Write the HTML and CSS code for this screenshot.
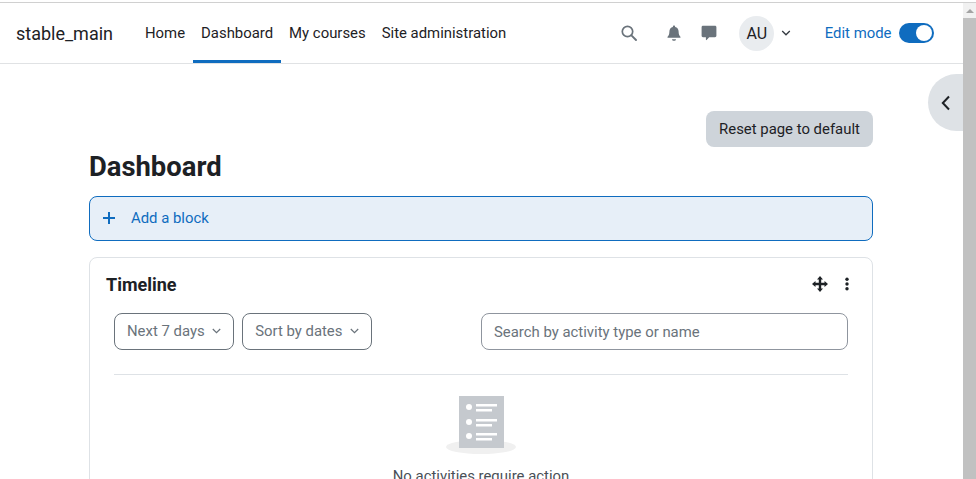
FILE: index.html
```html
<!DOCTYPE html>
<html lang="en">
<head>
<meta charset="utf-8">
<title>Dashboard</title>
<link rel="stylesheet" href="styles.css">
</head>
<body>
<div class="topline"></div>
<div class="window">
  <div class="page">
    <header class="navbar">
      <a class="brand">stable_main</a>
      <nav class="nav">
        <a class="nav-item">Home</a>
        <a class="nav-item active">Dashboard</a>
        <a class="nav-item">My courses</a>
        <a class="nav-item">Site administration</a>
      </nav>
      <div class="tools">
        <svg class="ic-search" width="16" height="16" viewBox="0 0 16 16"><circle cx="6.5" cy="6.5" r="5.2" fill="none" stroke="#6a737b" stroke-width="1.7"/><path d="M10.4 10.4L15 15" stroke="#6a737b" stroke-width="1.9" stroke-linecap="round"/></svg>
        <svg class="ic-bell" width="14" height="16" viewBox="0 0 14 16"><path d="M7 0.5c.7 0 1.1.5 1.1 1.1v.5c2.200.5 3.500 2.300 3.500 4.500 0 3.300 1 4.300 1.800 5.200.3.400.1 1-.5 1H1.100c-.6 0-.8-.6-.5-1 .8-.9 1.800-1.900 1.800-5.200 0-2.200 1.300-4 3.500-4.500v-.5C5.900 1 6.300.5 7 .5zM5 14.200h4c0 1-.9 1.600-2 1.600s-2-.6-2-1.600z" fill="#6a737b"/></svg>
        <svg class="ic-chat" width="16" height="16" viewBox="0 0 16 16"><path d="M2 .8h12c.8 0 1.400.6 1.400 1.400v8.600c0 .8-.6 1.400-1.400 1.400H8.200L5.600 15c-.3.300-.7.100-.7-.3v-2.500H2c-.8 0-1.400-.6-1.400-1.400V2.200C.6 1.400 1.200.8 2 .8z" fill="#6a737b"/></svg>
        <div class="avatar">AU</div>
        <svg class="ic-caret" width="10" height="6" viewBox="0 0 10 6"><path d="M1.200 1l3.800 3.800L8.800 1" fill="none" stroke="#343a40" stroke-width="1.300"/></svg>
        <span class="edit-label">Edit mode</span>
        <span class="switch"><span class="knob"></span></span>
      </div>
    </header>
    <button class="drawer-toggle"><svg width="10" height="16" viewBox="0 0 10 16"><path d="M8 1.500L1.800 8 8 14.500" fill="none" stroke="#1d2125" stroke-width="2"/></svg></button>
    <main class="content">
      <div class="actions"><button class="reset">Reset page to default</button></div>
      <h1 class="title">Dashboard</h1>
      <div class="add-block"><svg width="12" height="12" viewBox="0 0 12 12"><path d="M6 0v12M0 6h12" stroke="#0f6cbf" stroke-width="2"/></svg><span>Add a block</span></div>
      <section class="card">
        <div class="card-head">
          <h2 class="card-title">Timeline</h2>
          <div class="card-icons">
            <svg width="16" height="16" viewBox="0 0 16 16"><path d="M8 0L11 3.500H9.200V6.800H12.500V5L16 8 12.500 11V9.200H9.200V12.500H11L8 16 5 12.500H6.800V9.200H3.500V11L0 8 3.500 5V6.800H6.800V3.500H5z" fill="#1d2125"/></svg>
            <svg width="4" height="14" viewBox="0 0 4 14"><circle cx="2" cy="2.200" r="1.700" fill="#1d2125"/><circle cx="2" cy="7" r="1.700" fill="#1d2125"/><circle cx="2" cy="11.800" r="1.700" fill="#1d2125"/></svg>
          </div>
        </div>
        <div class="filters">
          <div class="select">Next 7 days<svg width="9" height="6" viewBox="0 0 9 6"><path d="M.8 1l3.700 3.700L8.200 1" fill="none" stroke="#6a737b" stroke-width="1.200"/></svg></div>
          <div class="select second">Sort by dates<svg width="9" height="6" viewBox="0 0 9 6"><path d="M.8 1l3.700 3.700L8.200 1" fill="none" stroke="#6a737b" stroke-width="1.200"/></svg></div>
          <div class="search">Search by activity type or name</div>
        </div>
        <hr class="rule">
        <div class="empty">
          <svg width="70" height="60" viewBox="0 0 70 60">
            <ellipse cx="35" cy="52" rx="35" ry="7" fill="#f0f0f0"/>
            <rect x="13" y="1" width="45" height="52" fill="#c5c9ce"/>
            <circle cx="23" cy="12" r="3" fill="#fff"/><rect x="30" y="9" width="21" height="2.500" fill="#fff"/><rect x="30" y="14" width="16" height="2.500" fill="#fff"/>
            <circle cx="23" cy="27" r="3" fill="#fff"/><rect x="30" y="24" width="21" height="2.500" fill="#fff"/><rect x="30" y="29" width="16" height="2.500" fill="#fff"/>
            <circle cx="23" cy="41" r="3" fill="#fff"/><rect x="30" y="38" width="21" height="2.500" fill="#fff"/><rect x="30" y="43" width="16" height="2.500" fill="#fff"/>
          </svg>
          <p class="empty-text">No activities require action</p>
        </div>
      </section>
    </main>
  </div>
  <div class="scrollbar"><span class="arrow"></span><span class="thumb"></span></div>
</div>
</body>
</html>
```

FILE: styles.css
```css
* { box-sizing: border-box; }
html, body { margin: 0; padding: 0; height: 100%; overflow: hidden; background: #fff; }
body { font-family: Roboto, "Liberation Sans", sans-serif; font-size: 14.9px; color: #1d2125; }
.topline { height: 3px; background: #fff; border-bottom: 1px solid #d0d0d0; }
.window { display: flex; height: 476px; }
.page { flex: 1; min-width: 0; position: relative; overflow: hidden; }
.scrollbar { width: 13px; background: #f1f1f1; display: flex; flex-direction: column; align-items: center; }
.arrow { margin-top: 6px; width: 0; height: 0; border-left: 4px solid transparent; border-right: 4px solid transparent; border-bottom: 4px solid #a3a3a3; }
.thumb { margin-top: 5px; width: 100%; flex: 1; background: #c1c1c1; }
.navbar { height: 61px; display: flex; align-items: center; border-bottom: 1px solid #e0e2e4; padding-left: 16px; }
.brand { font-size: 18px; margin-right: 24px; width: 97px; white-space: nowrap; }
.nav { display: flex; height: 60px; margin-left: 0; }
.nav-item { display: flex; align-items: center; padding: 0 8px; height: 60px; border-bottom: 3px solid transparent; padding-top: 3px; white-space: nowrap; }
.nav-item.active { border-bottom-color: #0f6cbf; }
.tools { margin-left: auto; display: flex; align-items: center; height: 60px; padding-right: 29px; }
.ic-search { margin-right: 30px; }
.ic-bell { margin-right: 20px; }
.ic-chat { margin-right: 22px; }
.avatar { width: 35px; height: 35px; border-radius: 50%; background: #e9ecef; display: flex; align-items: center; justify-content: center; font-size: 16px; }
.ic-caret { margin: 0 0 0 7px; }
.edit-label { color: #0f6cbf; margin: 0 7.5px 0 33.500px; white-space: nowrap; }
.switch { width: 35px; height: 20px; border-radius: 10px; background: #0f6cbf; position: relative; display: block; }
.knob { position: absolute; top: 2px; right: 2px; width: 16px; height: 16px; border-radius: 50%; background: #fff; }
.drawer-toggle { position: absolute; right: 0; top: 71px; width: 35px; height: 57px; border: 0; padding: 0; border-radius: 29px 0 0 29px; background: #dee2e6; display: flex; align-items: center; justify-content: center; }
.content { padding: 47px 90px 0 89px; }
.actions { display: flex; justify-content: flex-end; }
.reset { height: 36px; width: 167px; border: 0; border-radius: 8px; background: #ced4da; color: #1d2125; font: 14.9px Roboto, sans-serif; padding: 0; }
.title { font-size: 27.4px; font-weight: 700; line-height: 34px; margin: 3px 0 0; }
.add-block { margin-top: 12px; height: 45px; border: 1px solid #0f6cbf; border-radius: 8px; background: #e7eff8; color: #0f6cbf; display: flex; align-items: center; padding: 0 0 2px 13px; gap: 16px; }
.card { margin-top: 16px; height: 300px; border: 1px solid #dee2e6; border-radius: 8px; padding: 0 24px; }
.card-head { display: flex; justify-content: space-between; align-items: center; margin: 0 -24px; padding: 15px 24px 0 16px; height: 39px; }
.card-title { font-size: 18px; font-weight: 700; margin: 0; line-height: 24px; }
.card-icons { display: flex; align-items: center; gap: 17px; margin: 0 -1px 2px 0; }
.filters { display: flex; margin-top: 16px; }
.select { height: 37px; border: 1px solid #6a737b; border-radius: 8px; display: flex; align-items: center; padding: 0 12px 2px; gap: 7px; color: #6a737b; margin-right: 8px; white-space: nowrap; }
.select.second { padding-left: 12.5px; gap: 7.5px; }
.search { margin-left: auto; width: 367px; height: 37px; border: 1px solid #8f959e; border-radius: 8px; display: flex; align-items: center; padding: 0 12px; color: #6a737b; }
.rule { border: 0; border-top: 1px solid #dee2e6; margin: 24px 0 0; }
.empty { display: flex; flex-direction: column; align-items: center; padding-top: 20px; }
.empty-text { margin: 0; color: #495057; line-height: 20px; margin-top: 11px; }
```
